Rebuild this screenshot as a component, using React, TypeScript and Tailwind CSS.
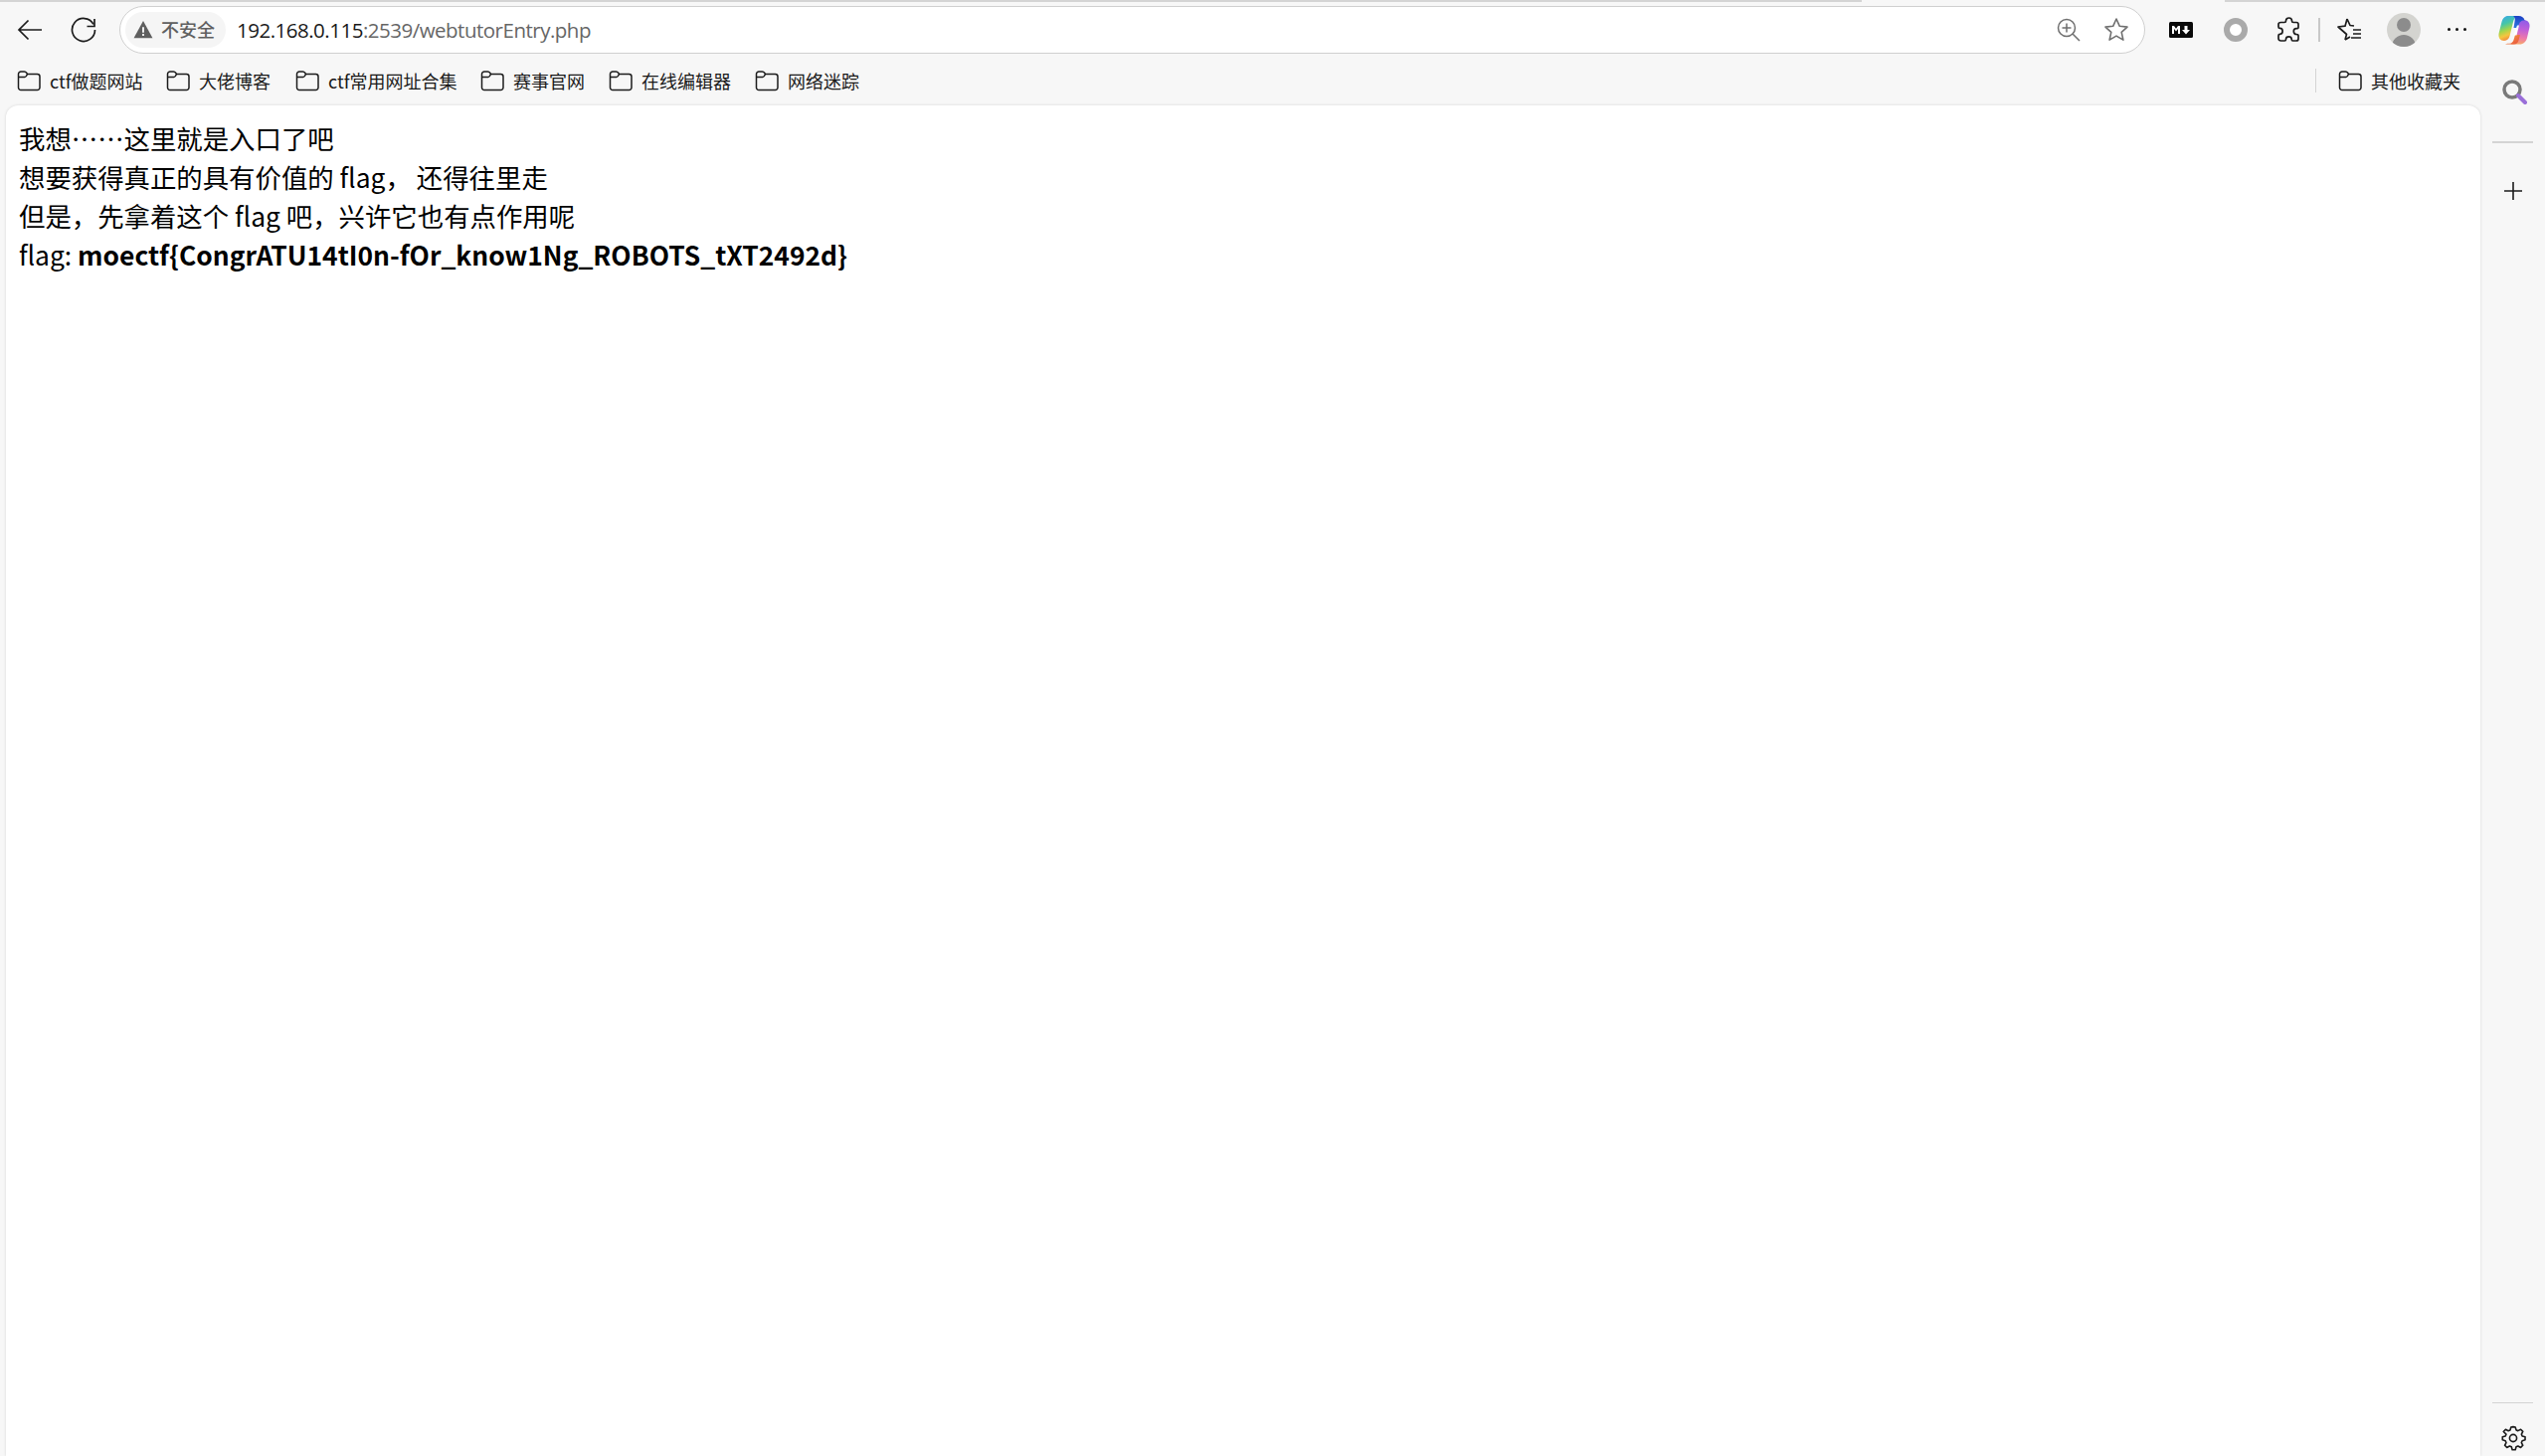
import React from "react";

const ui = { fontFamily: '"Noto Sans CJK SC", "Noto Sans", sans-serif' };

function Folder() {
  return (
    <svg width="24" height="24" viewBox="0 0 24 24" fill="none" stroke="#1c1c1c" strokeWidth="1.5" className="shrink-0">
      <path d="M1.5 5.5a2.5 2.5 0 0 1 2.5-2.5h3.5c1 0 1.6.4 2.2 1.2l.8 1.3H20.5a2.5 2.5 0 0 1 2.5 2.5v11a2.5 2.5 0 0 1-2.5 2.500H4a2.500 2.500 0 0 1-2.500-2.500z" />
      <path d="M1.5 8.5h6.5c1 0 1.6-.8 2.5-3" />
    </svg>
  );
}

function Bookmark({ label, className }: { label: string; className: string }) {
  return (
    <div className={`flex items-center gap-[9px] ${className}`}>
      <Folder />
      <span className="text-[18px] leading-6 text-[#1a1a1a] whitespace-nowrap">{label}</span>
    </div>
  );
}

function Copilot() {
  return (
    <svg width="34" height="32" viewBox="0 0 34 32">
      <defs>
        <linearGradient id="cA" x1="0.1" y1="0" x2="0.4" y2="1">
          <stop offset="0" stopColor="#38a6ee" />
          <stop offset="0.35" stopColor="#45c6a8" />
          <stop offset="0.6" stopColor="#a4d64c" />
          <stop offset="0.8" stopColor="#f5c63f" />
          <stop offset="1" stopColor="#f1873c" />
        </linearGradient>
        <linearGradient id="cB" x1="0.6" y1="0" x2="0.5" y2="1">
          <stop offset="0" stopColor="#8d5ce8" />
          <stop offset="0.4" stopColor="#c060d8" />
          <stop offset="0.75" stopColor="#ef79a8" />
          <stop offset="1" stopColor="#f6a86a" />
        </linearGradient>
        <linearGradient id="cC" x1="0" y1="0" x2="0" y2="1">
          <stop offset="0" stopColor="#1c3fc4" />
          <stop offset="1" stopColor="#2f78e0" />
        </linearGradient>
        <linearGradient id="cD" x1="0" y1="0" x2="1" y2="1">
          <stop offset="0" stopColor="#f2a13f" />
          <stop offset="1" stopColor="#e9503f" />
        </linearGradient>
      </defs>
      <path d="M11 2h9.500c-2.500 1-3.800 3-4.500 6l-3.400 14c-.7 2.800-2.600 5-5.600 5C3 27 .8 24 1.600 19.500L4.500 8C5.500 4.500 7.500 2 11 2z" fill="url(#cA)" />
      <path d="M26 6c4.500 0 7.300 3 6.400 7.500L30 24c-1 4-3.700 6.500-7.500 6.500H13.500c2.500-1 3.800-3 4.500-6l3.400-14C22 7.800 23.500 6 26 6z" fill="url(#cB)" />
      <path d="M16 2h5.500c3 0 5.500 1.600 6 4.500-2.800-.5-5 1-5.800 4.500l-.7 3H16.500l1-6c.5-2.800 .5-5-1.500-6z" fill="url(#cC)" />
      <path d="M8 30.500h8.500c3 0 4.800-2 5.300-5L23 21h-5l-1.300 4.500c-.6 2.500-2.200 4.200-4.500 4.200-1.500 0-3-.2-4.200.8z" fill="url(#cD)" />
      <path d="M20 11.500h2l-2.500 10h-3.200z" fill="#ffffff" opacity="0.95" />
    </svg>
  );
}

export default function App() {
  return (
    <div className="h-[1464px] w-[2559px] overflow-hidden bg-[#f7f7f7] flex flex-col" style={ui}>
      {/* window top edge, broken where the tab sits */}
      <div className="h-[2px] shrink-0 flex">
        <div className="w-[1872px] bg-[#d4d4d4]" />
        <div className="w-[365px]" />
        <div className="flex-1 bg-[#d4d4d4]" />
      </div>
      {/* top toolbar */}
      <div className="h-[54px] shrink-0 flex items-center pt-[1px]">
        <div className="w-[120px] shrink-0 flex items-center">
          <svg width="26" height="26" viewBox="0 0 26 26" fill="none" stroke="#1c1c1c" strokeWidth="1.7" className="ml-[17px]">
            <path d="M25 13H2M11.500 3.500 2 13l9.500 9.500" />
          </svg>
          <svg width="26" height="26" viewBox="0 0 26 26" fill="none" stroke="#1c1c1c" strokeWidth="1.7" className="ml-[28px]">
            <path d="M24 2v7.500h-7.500" />
            <path d="M23 7.300A11.500 11.500 0 1 0 24.500 13" />
          </svg>
        </div>
        <div className="w-[2037px] h-[48px] shrink-0 rounded-full border-[1.5px] border-[#d0d0d0] bg-white flex items-center pl-[5px] pr-[15px]">
          <div className="h-[36px] w-[101px] shrink-0 rounded-full bg-[#f5f5f5] flex items-center gap-[8px] pl-[8px]">
            <svg width="20" height="20" viewBox="0 0 18 18">
              <path d="M9 1 17.500 16.500H.5z" fill="#5f5f5f" />
              <path d="M8.200 6.500h1.600v5H8.200zM8.200 12.700h1.600v1.600H8.200z" fill="#fff" />
            </svg>
            <span className="text-[18px] font-medium text-[#606060] whitespace-nowrap">不安全</span>
          </div>
          <div className="ml-[11px] pt-[2px] text-[20.5px] whitespace-nowrap" style={{ fontFamily: '"Open Sans", "Noto Sans", sans-serif', letterSpacing: "-0.5px" }}>
            <span className="text-[#1a1a1a]">192.168.0.115</span>
            <span className="text-[#666666]">:2539/webtutorEntry.php</span>
          </div>
          <div className="ml-auto flex items-center gap-[23px]">
            <svg width="24" height="24" viewBox="0 0 24 24" fill="none" stroke="#6f6f6f" strokeWidth="1.500">
              <circle cx="10" cy="10" r="8.500" />
              <path d="M10 5.500v9M5.500 10h9M16 16l7 7" />
            </svg>
            <svg width="26" height="26" viewBox="0 0 26 26" fill="none" stroke="#6f6f6f" strokeWidth="1.600" strokeLinejoin="round">
              <path d="M13 2l3.300 7.300 7.700.8-5.800 5.200 1.700 7.800L13 19.100 6.100 23.100l1.700-7.800L2 10.100l7.700-.8z" />
            </svg>
          </div>
        </div>
        <div className="flex-1 flex items-center">
          <svg width="24" height="16" viewBox="0 0 24 16" className="ml-[24px]">
            <rect width="24" height="16" rx="1.500" fill="#0a0a0a" />
            <path d="M3 12V4h2l2 2.700L9 4h2v8H9V7L7 9.500 5 7v5zM15.500 4h3v4H21l-4 4.500L13 8h2.500z" fill="#fff" />
          </svg>
          <div className="ml-[31px] h-[24px] w-[24px] rounded-full border-[6px] border-[#aaaaaa] bg-white" />
          <svg width="24" height="26" viewBox="0 0 24 26" fill="none" stroke="#1c1c1c" strokeWidth="1.700" strokeLinejoin="round" className="ml-[29px]">
            <path d="M9.500 4c0-4 6-4 6 0 0 1 .5 1.500 1.500 1.500h3c1.500 0 2 .8 2 2v3c0 1-1 1.200-2 1.200-3.600 0-3.600 5.800 0 5.800 1 0 2 .2 2 1.200v3.300c0 1.200-.8 2-2 2h-3.500c-1 0-1.300-.7-1.300-1.500 0-3.500-5.700-3.500-5.700 0 0 .8-.3 1.500-1.300 1.500H4.500c-1.500 0-2.500-.8-2.500-2.300v-3c0-1 .8-1.400 1.500-1.400 3.500 0 3.500-6 0-6-.7 0-1.500-.4-1.500-1.400V7.500C2 6 3 5.500 4.500 5.500h3.500c1 0 1.500-.5 1.500-1.500z" />
          </svg>
          <div className="ml-[18px] h-[24px] w-[1.500px] bg-[#c8c8c8]" />
          <svg width="26" height="26" viewBox="0 0 26 26" fill="none" stroke="#1c1c1c" strokeWidth="1.700" strokeLinejoin="round" className="ml-[16px]">
            <path d="M11 2l3 6.500 4 .5M9 23l1.500-5.500L2 10l7-.8L11 2M9 23l5-3" />
            <path d="M17 13h8M17 17h8M15 21h10" />
          </svg>
          <div className="ml-[25px] relative h-[34px] w-[34px] rounded-full bg-[#d4d4d0] overflow-hidden">
            <div className="absolute left-[10px] top-[5px] h-[14px] w-[14px] rounded-full bg-[#8c8c8c]" />
            <div className="absolute left-[5px] top-[22px] h-[16px] w-[24px] rounded-t-full bg-[#8c8c8c]" />
          </div>
          <div className="ml-[27px] flex gap-[5px]">
            <div className="h-[3px] w-[3px] rounded-full bg-[#111]" />
            <div className="h-[3px] w-[3px] rounded-full bg-[#111]" />
            <div className="h-[3px] w-[3px] rounded-full bg-[#111]" />
          </div>
          <div className="ml-[31px]"><Copilot /></div>
        </div>
      </div>

      {/* bookmarks */}
      <div className="h-[50px] shrink-0 flex items-center pl-[17px]">
        <Bookmark label="ctf做题网站" className="w-[150px]" />
        <Bookmark label="大佬博客" className="w-[130px]" />
        <Bookmark label="ctf常用网址合集" className="w-[186px]" />
        <Bookmark label="赛事官网" className="w-[129px]" />
        <Bookmark label="在线编辑器" className="w-[147px]" />
        <Bookmark label="网络迷踪" className="w-[120px]" />
        <div className="ml-auto flex items-center">
          <div className="h-[24px] w-[1.500px] bg-[#d4d4d4] mr-[22px]" />
          <Bookmark label="其他收藏夹" className="" />
        </div>
        <svg width="26" height="26" viewBox="0 0 26 26" fill="none" className="ml-[41px] mr-[18px] self-end mb-[1px]">
          <circle cx="11" cy="11" r="8" stroke="#7a7a7a" strokeWidth="3.500" />
          <path d="M17 17l7 7" stroke="#9a6fd8" strokeWidth="4" strokeLinecap="round" />
        </svg>
      </div>

      {/* body */}
      <div className="flex-1 flex min-h-0">
        <div className="w-[6px] shrink-0" />
        <main className="flex-1 bg-white rounded-t-[12px] shadow-[0_0_3px_rgba(0,0,0,0.14)] pt-[13px] pl-[13px] text-[26.4px] leading-[39px] text-black">
          <div>我想……这里就是入口了吧</div>
          <div>想要获得真正的具有价值的 flag，<span className="ml-[5px]">还得往里走</span></div>
          <div>但是，先拿着这个 flag 吧，兴许它也有点作用呢</div>
          <div>flag: <b className="font-bold">moectf{"{"}CongrATU14tI0n-fOr_know1Ng_ROBOTS_tXT2492d{"}"}</b></div>
        </main>
        <aside className="w-[65px] shrink-0 flex flex-col items-center">
          <div className="mt-[36px] h-[1.500px] w-[41px] bg-[#d4d4d4]" />
          <svg width="20" height="20" viewBox="0 0 20 20" stroke="#1c1c1c" strokeWidth="1.600" className="mt-[38px]">
            <path d="M10 1v18M1 10h18" />
          </svg>
          <div className="mt-auto h-[1.500px] w-[41px] bg-[#d4d4d4]" />
          <svg width="26" height="26" viewBox="0 0 24 24" fill="none" stroke="#1c1c1c" strokeWidth="1.500" strokeLinejoin="round" className="mt-[22px] mb-[5px]">
            <path d="M12 1.500l2 .3.800 2.700 1.700.7 2.500-1.300 2 2-1.300 2.500.7 1.700 2.700.8v2.800l-2.700.8-.7 1.700 1.300 2.500-2 2-2.500-1.300-1.700.7-.8 2.700h-2.800l-.8-2.700-1.700-.7-2.500 1.300-2-2 1.300-2.500-.7-1.700-2.700-.8v-2.800l2.700-.8.700-1.700L3 6l2-2 2.500 1.300 1.700-.7.800-2.700z" />
            <circle cx="12" cy="12" r="3.300" />
          </svg>
        </aside>
      </div>
    </div>
  );
}
